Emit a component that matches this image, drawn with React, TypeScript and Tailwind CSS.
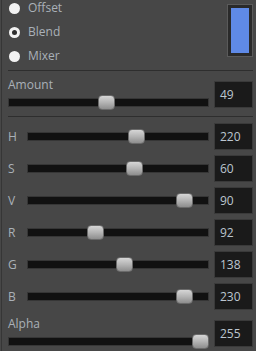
import React from "react";

const font = { fontFamily: '"Open Sans", "Noto Sans", sans-serif' };

function Slider({ frac }: { frac: number }) {
  return (
    <div className="relative h-[9px] flex-1">
      <div className="h-full border border-[#363636] bg-[#111111]" />
      <div
        className="absolute top-[-3px] h-[15px] w-[17px] rounded-[4px] border border-[#6a6a6a] bg-gradient-to-b from-[#d6d6d6] via-[#b4b4b4] to-[#8e8e8e]"
        style={{ left: `calc((100% - 17px) * ${frac})` }}
      />
    </div>
  );
}

function ValueBox({ v }: { v: number }) {
  return (
    <div className="flex h-[27px] w-[39px] items-center border border-[#3a3a3a] bg-[#1a1a1a] pl-[5px] text-[12px] text-[#bcc6d0]">
      {v}
    </div>
  );
}

function Radio({ label, checked }: { label: string; checked?: boolean }) {
  return (
    <div className="flex h-[24px] items-center gap-[8px]">
      <div className="flex h-[11px] w-[11px] items-center justify-center rounded-full bg-[#f2f2f2]">
        {checked && <div className="h-[5px] w-[5px] rounded-full bg-[#2e2e2e]" />}
      </div>
      <span className="text-[12px] text-[#aab1b8]">{label}</span>
    </div>
  );
}

const rows = [
  { l: "H", v: 220, max: 360 },
  { l: "S", v: 60, max: 100 },
  { l: "V", v: 90, max: 100 },
  { l: "R", v: 92, max: 255 },
  { l: "G", v: 138, max: 255 },
  { l: "B", v: 230, max: 255 },
];

export default function App() {
  return (
    <div className="flex h-[351px] w-[256px] overflow-hidden bg-[#474747]" style={font}>
      <div className="w-[1px] shrink-0" />
      <div className="w-[1px] shrink-0 bg-[#363636]" />
      <div className="flex flex-1 flex-col pl-[6px] pr-[3px]">
        {/* top */}
        <div className="flex h-[70px] justify-between">
          <div className="mt-[-4px] ml-[1px] flex flex-col">
            <Radio label="Offset" />
            <Radio label="Blend" checked />
            <Radio label="Mixer" />
          </div>
          <div className="mt-[4px] h-[53px] w-[26px] border border-[#5a5a5a] bg-[#2a2a2a] p-[3px]">
            <div className="h-full w-full bg-[#5f8ae7]" />
          </div>
        </div>
        <div className="h-[1px] bg-[#2e2e2e]" />
        {/* amount */}
        <div className="flex h-[45px] gap-[5px]">
          <div className="flex flex-1 flex-col pt-[6px]">
            <div className="h-[16px] text-[12px] leading-[16px] text-[#aab1b8]">Amount</div>
            <div className="mt-[5px] flex">
              <Slider frac={0.49} />
            </div>
          </div>
          <div className="mt-[10px]">
            <ValueBox v={49} />
          </div>
        </div>
        <div className="h-[1px] bg-[#2e2e2e]" />
        {/* rows */}
        <div className="mt-[6px] flex flex-col gap-[5px]">
          {rows.map((r) => (
            <div key={r.l} className="flex h-[27px] items-center gap-[5px]">
              <div className="flex flex-1 items-center">
                <div className="w-[19px] text-[12px] text-[#aab1b8]">{r.l}</div>
                <Slider frac={r.v / r.max} />
              </div>
              <ValueBox v={r.v} />
            </div>
          ))}
        </div>
        {/* alpha */}
        <div className="flex gap-[5px]">
          <div className="flex flex-1 flex-col pt-[6px]">
            <div className="h-[16px] text-[12px] leading-[16px] text-[#aab1b8]">Alpha</div>
            <div className="mt-[5px] flex">
              <Slider frac={1} />
            </div>
          </div>
          <div className="mt-[10px]">
            <ValueBox v={255} />
          </div>
        </div>
      </div>
    </div>
  );
}
